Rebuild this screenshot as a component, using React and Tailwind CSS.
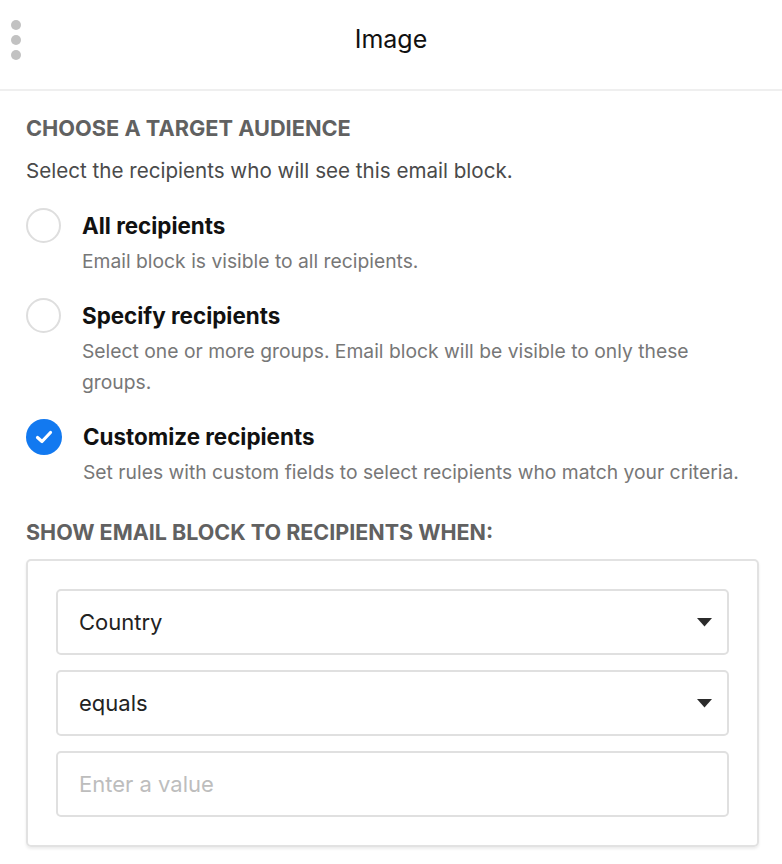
import React, { useState } from 'react';

const OPTIONS = [
  { id: 'all', label: 'All recipients', desc: 'Email block is visible to all recipients.' },
  { id: 'specify', label: 'Specify recipients', desc: 'Select one or more groups. Email block will be visible to only these groups.' },
  { id: 'custom', label: 'Customize recipients', desc: 'Set rules with custom fields to select recipients who match your criteria.' },
];

function Radio({ checked }) {
  if (checked) {
    return (
      <div className="w-[36px] h-[36px] rounded-full bg-[#1279f0] flex items-center justify-center shrink-0">
        <svg width="18" height="14" viewBox="0 0 18 14" fill="none">
          <path d="M2.5 7.5 L7 11.5 L15.5 2.5" stroke="white" strokeWidth="3.2" strokeLinecap="round" strokeLinejoin="round" />
        </svg>
      </div>
    );
  }
  return <div className="w-[35px] h-[35px] rounded-full border-2 border-[#dedede] bg-white shrink-0" />;
}

function Caret() {
  return (
    <svg width="15" height="9" viewBox="0 0 15 9" className="shrink-0">
      <path d="M0 0 H15 L7.5 8.5 Z" fill="#2b2b2b" />
    </svg>
  );
}

function SelectBox({ value }) {
  return (
    <div className="h-[66px] rounded-[5px] border-2 border-[#e0e0e0] bg-white flex items-center justify-between pl-[21px] pr-[15px]">
      <span className="text-[22px] text-[#222]">{value}</span>
      <Caret />
    </div>
  );
}

export default function App() {
  const [selected, setSelected] = useState('custom');
  const [val, setVal] = useState('');

  return (
    <div className="w-[782px] min-h-[864px] bg-white font-['Inter',sans-serif]">
      {/* header */}
      <div className="h-[91px] border-b-2 border-[#efefef] relative flex items-center justify-center">
        <div className="absolute left-[11px] top-[20px] flex flex-col gap-[5px]">
          <span className="w-[10px] h-[10px] rounded-full bg-[#c2c2c2]" />
          <span className="w-[10px] h-[10px] rounded-full bg-[#c2c2c2]" />
          <span className="w-[10px] h-[10px] rounded-full bg-[#c2c2c2]" />
        </div>
        <div className="text-[25px] text-[#111] -mt-[10px]">Image</div>
      </div>

      <div className="px-[26px] pt-[23px]">
        <div className="text-[21.75px] font-bold text-[#616161] leading-[28px]">CHOOSE A TARGET AUDIENCE</div>
        <div className="text-[20.6px] text-[#4a4a4a] mt-[15px] leading-[28px]">Select the recipients who will see this email block.</div>

        <div className="mt-[23px] flex flex-col gap-[21px]">
          {OPTIONS.map(o => (
            <div key={o.id} className="flex gap-[21px] cursor-pointer" onClick={() => setSelected(o.id)}>
              <Radio checked={selected === o.id} />
              <div className="pt-[3px]">
                <div className="text-[22.4px] font-bold text-[#111] leading-[30px]">{o.label}</div>
                <div className="text-[19.3px] text-[#777] leading-[31px] mt-[5px] pr-[4px]">{o.desc}</div>
              </div>
            </div>
          ))}
        </div>

        <div className="text-[21.5px] font-bold text-[#616161] leading-[28px] mt-[30px]">SHOW EMAIL BLOCK TO RECIPIENTS WHEN:</div>

        <div className="mt-[13px] mr-[-3px] rounded-[5px] border-2 border-[#e2e2e2] shadow-[0_2px_3px_rgba(0,0,0,0.08)] px-[28px] py-[28px] flex flex-col gap-[15px]">
          <SelectBox value="Country" />
          <SelectBox value="equals" />
          <input
            value={val}
            onChange={e => setVal(e.target.value)}
            placeholder="Enter a value"
            className="h-[66px] rounded-[5px] border-2 border-[#e0e0e0] bg-white pl-[21px] text-[22px] text-[#222] placeholder:text-[#bdbdbd] outline-none"
          />
        </div>
      </div>
    </div>
  );
}
